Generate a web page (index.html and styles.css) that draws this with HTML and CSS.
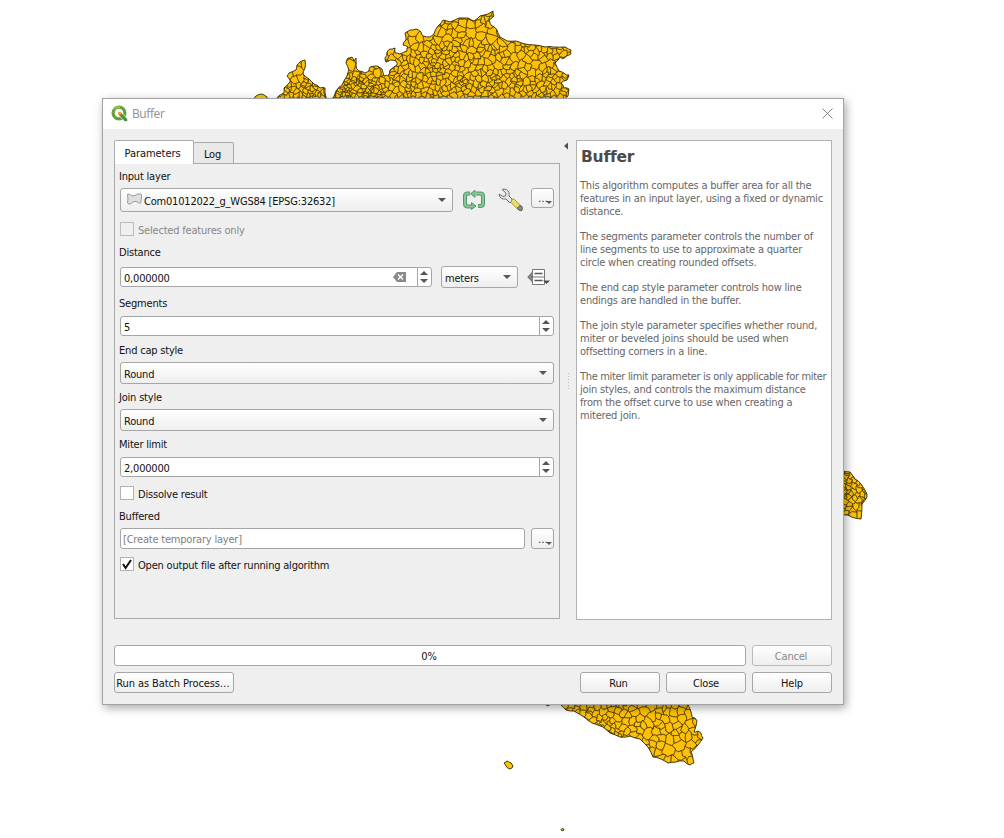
FILE: index.html
```
<!DOCTYPE html>
<html lang="en">
<head>
<meta charset="utf-8">
<title>Buffer</title>
<link rel="stylesheet" href="styles.css">
</head>
<body>
<svg class="map" id="map" width="1004" height="838" viewBox="0 0 1004 838"></svg>
<main class="dialog">
  <header class="titlebar">
    <svg class="logo" width="17" height="17" viewBox="0 0 17 17"><circle cx="8" cy="8" r="5.9" fill="none" stroke="#62a33c" stroke-width="3.2"/><path d="M3 4.500A6 6 0 0 1 9 2" fill="none" stroke="#8cc04b" stroke-width="2"/><path d="M8 7.500l2.600.3 6 6.200v2.500h-3L8 10.500z" fill="#509039" stroke="#fff" stroke-width=".7"/><path d="M7 6.800h3v3H7z" fill="#ee9b3c"/></svg>
    <span class="title">Buffer</span>
    <svg class="close" width="11" height="11" viewBox="0 0 11 11"><path d="M.5.5l10 10M10.500.5l-10 10" stroke="#858585" fill="none"/></svg>
  </header>
  <div class="body">
    <div class="panels">
      <section class="left">
        <nav class="tabs"><span class="tab active">Parameters</span><span class="tab log">Log</span></nav>
        <div class="pane">
          <label class="lbl first">Input layer</label>
          <div class="row input-row">
            <div class="combo layer"><svg width="17" height="13" viewBox="0 0 17 13"><path d="M1.500 2Q1 .8 3 1q2.500 3 6 1.500Q11 .3 14.500 1q1.500.2 1 2l-.6 6.500q-.5 1.500-2 .5Q9 6.500 5 10.500q-2.500 1.500-3.500-.5Q2.500 6 1.500 2z" fill="#dedfdf" stroke="#989a9a"/></svg><span>Com01012022_g_WGS84 [EPSG:32632]</span><i class="arrow"></i></div>
            <svg class="cycle" width="24" height="20" viewBox="0 0 24 20"><g fill="none" stroke="#4f9a68" stroke-width="4"><path d="M8 3.500H6Q3 3.500 3 6v7.500q0 3 3 3h3"/><path d="M14 3.500h4q3 0 3 3v7q0 2.500-3 2.500h-2"/></g><path d="M13 .3v7L8.500 3.700zM9.500 12.500v7l4.500-3.500z" fill="#80bd8b" stroke="#4f9a68"/><g fill="none" stroke="#8cc598" stroke-width="2"><path d="M7.500 3.500H6Q3 3.500 3 6v7.500q0 3 3 3h4"/><path d="M12 3.500h6q3 0 3 3v7q0 2.500-3 2.500h-1.500"/></g></svg>
            <svg class="wrench" width="26" height="24" viewBox="0 0 26 24"><path d="M4 1.500Q9 0 11 4.500v3.500l4 4-3 3-4-4Q2 12 1 6l4 2.500 2.500-.5.5-3z" fill="#e7e9e6" stroke="#6c706c"/><path d="M13.800 11l2.500.3 6.500 6.300-3.300 3.500-6.500-6.500z" fill="#eddb62" stroke="#a69842"/><path d="M22 17.500q2.500.5 2.500 3t-2.500 2.300l-3-2.500z" fill="#8d8d82" stroke="#55564f"/></svg>
            <div class="more">…<i></i></div>
          </div>
          <div class="check disabled c1"><b></b><span>Selected features only</span></div>
          <label class="lbl l2">Distance</label>
          <div class="row dist-row">
            <div class="field dist"><span>0,000000</span><svg class="clear" width="13" height="10" viewBox="0 0 13 10"><path d="M4 0h9v10H4L0 5z" fill="#8a8a8a"/><path d="M5 2.500l5 5m0-5l-5 5" stroke="#fff" stroke-width="1.300"/></svg><em class="spin"></em></div>
            <div class="combo unit"><span>meters</span><i class="arrow"></i></div>
            <svg class="override" width="24" height="18" viewBox="0 0 24 18"><path d="M6 3.500v11L.8 9z" fill="#888" stroke="#666"/><path d="M5.500 1.500h12v15h-12z" fill="#fff" stroke="#777"/><path d="M7.500 5.500h8M7.500 12.500h8" stroke="#555" stroke-width="1.400"/><path d="M3.500 9h14" stroke="#777"/><path d="M16 12.500h7L19.500 16z" fill="#4d4d4d"/></svg>
          </div>
          <label class="lbl l3">Segments</label>
          <div class="field seg"><span>5</span><em class="spin"></em></div>
          <label class="lbl l4">End cap style</label>
          <div class="combo wide"><span>Round</span><i class="arrow"></i></div>
          <label class="lbl l5">Join style</label>
          <div class="combo wide"><span>Round</span><i class="arrow"></i></div>
          <label class="lbl l5">Miter limit</label>
          <div class="field seg"><span>2,000000</span><em class="spin"></em></div>
          <div class="check c2"><b></b><span>Dissolve result</span></div>
          <label class="lbl l6">Buffered</label>
          <div class="row out-row"><div class="field out"><span>[Create temporary layer]</span></div><div class="more">…<i></i></div></div>
          <div class="check c3"><b><svg width="10" height="11" viewBox="0 0 10 11"><path d="M1 5l2.600 4L9 1" fill="none" stroke="#111" stroke-width="2"/></svg></b><span>Open output file after running algorithm</span></div>
        </div>
      </section>
      <div class="splitter"><svg width="16" height="480" viewBox="0 0 16 480"><path d="M8 2.500v7L4 6z" fill="#505050"/><path d="M8.500 233v17" stroke="#bdbdbd" stroke-dasharray="1 2"/></svg></div>
      <article class="help">
        <h1>Buffer</h1>
        <p>This algorithm computes a buffer area for all the<br>features in an input layer, using a fixed or dynamic<br>distance.</p>
        <p>The segments parameter controls the number of<br>line segments to use to approximate a quarter<br>circle when creating rounded offsets.</p>
        <p>The end cap style parameter controls how line<br>endings are handled in the buffer.</p>
        <p>The join style parameter specifies whether round,<br>miter or beveled joins should be used when<br>offsetting corners in a line.</p>
        <p><span class="tight">The miter limit parameter is only applicable for miter</span><br>join styles, and controls the maximum distance<br>from the offset curve to use when creating a<br>mitered join.</p>
      </article>
    </div>
    <div class="progress-row"><div class="progress">0%</div><div class="btn off">Cancel</div></div>
    <footer class="buttons"><div class="btn batch">Run as Batch Process…</div><div class="btn run">Run</div><div class="btn">Close</div><div class="btn">Help</div></footer>
  </div>
</main>
<script src="map.js"></script>
</body>
</html>
```

FILE: styles.css
```
* { box-sizing: border-box; }
body { margin: 0; width: 1004px; height: 838px; overflow: hidden; background: #fff; color: #111; font: 11px/16px "DejaVu Sans Condensed", "DejaVu Sans", sans-serif; font-stretch: condensed; letter-spacing: -0.2px; white-space: nowrap; }
svg { display: block; flex: none; }
.map { position: absolute; left: 0; top: 0; }
.map path { stroke: #40380f; stroke-linejoin: round; }
.dialog { position: absolute; left: 102px; top: 98px; width: 742px; height: 607px; border: 1px solid #a2a2a2; background: #efefef; box-shadow: 2px 3px 9px rgba(0,0,0,.35); }
.titlebar { height: 30px; background: #fff; display: flex; align-items: center; padding: 0 10px 1px 8px; }
.title { margin-left: 4px; flex: 1; font-family: "Open Sans", sans-serif; font-stretch: normal; font-size: 12px; color: #909090; letter-spacing: -0.4px; padding-top: 1px; }
.body { padding: 11px 11px 0; }
.panels { display: flex; height: 480px; }
.left { width: 446px; display: flex; flex-direction: column; }
.tabs { display: flex; align-items: flex-end; height: 23px; }
.tab { border: 1px solid #ababab; border-bottom: 0; border-radius: 2px 2px 0 0; text-align: center; }
.tab.active { width: 80px; height: 24px; background: #fff; line-height: 25px; align-self: flex-start; letter-spacing: -0.05px; padding-right: 3px; z-index: 1; }
.tab.log { width: 40px; height: 21px; background: #e9e9e9; border-left: 0; line-height: 24px; padding-right: 2px; }
.pane { height: 456px; border: 1px solid #a9a9a9; padding: 4px 5px; display: flex; flex-direction: column; }
.lbl { height: 16px; margin-left: -1px; flex: none; padding-top: 1px; }
.lbl.l2 { padding-top: 0; }
.l2 { margin-top: 7px; }
.l3 { margin-top: 7px; }
.l4, .l6 { margin-top: 6px; }
.l5 { margin-top: 5px; }
.row { display: flex; align-items: center; flex: none; }
.combo, .field, .btn, .more, .progress { border: 1px solid #a6a6a6; border-radius: 3px; display: flex; align-items: center; flex: none; }
.combo, .btn, .more { background: linear-gradient(#fff, #eee); }
.field, .progress { background: #fff; }
.combo { height: 22px; padding: 3px 6px 0 3px; justify-content: space-between; }
.arrow { width: 0; height: 0; border: 4px solid transparent; border-top: 4px solid #555; border-bottom: 0; margin-top: -3px; }
.input-row { margin-top: 4px; height: 24px; }
.layer { width: 333px; height: 24px; }
.layer span { flex: 1; margin-left: 1px; }
.layer > svg { margin: -4px 0 0 2px; }
.cycle { margin-left: 9px; }
.wrench { margin-left: 12px; }
.more { width: 23px; height: 20px; margin-left: auto; padding: 2px 2px 0 6px; position: relative; color: #222; line-height: 18px; align-self: flex-start; }
.more i { position: absolute; right: 1px; bottom: 3px; border: 3px solid transparent; border-top-color: #555; border-bottom: 0; }
.out-row .more { height: 21px; }
.check { display: flex; flex: none; height: 16px; }
.check span { padding-top: 1px; }
.check b { width: 14px; height: 14px; border: 1px solid #b2b2b2; background: #fff; padding: 1px; margin-right: 4px; }
.disabled { color: #888; }
.disabled b { background: #f0f0f0; border-color: #bcbcbc; }
.c1 { margin-top: 10px; }
.dist-row { margin-top: 5px; height: 22px; }
.field { height: 20px; padding: 3px 0 0 3px; position: relative; }
.dist { width: 312px; justify-content: space-between; }
.clear { margin: -4px 25px 0 0; }
.spin { position: absolute; right: 0; top: 0; bottom: 0; width: 14px; border-left: 1px solid #a6a6a6; }
.spin::before, .spin::after { content: ""; position: absolute; left: 2px; border: 4px solid transparent; }
.spin::before { top: 3px; border-top: 0; border-bottom-color: #555; }
.spin::after { bottom: 3px; border-bottom: 0; border-top-color: #555; }
.unit { width: 77px; margin-left: 9px; }
.override { margin-left: 9px; }
.seg { width: 434px; margin-top: 5px; }
.wide { width: 434px; margin-top: 4px; }
.c2 { margin-top: 9px; }
.out-row { margin-top: 4px; height: 21px; }
.out { width: 405px; height: 21px; color: #808080; padding: 2px 0 0 2px; }
.c3 { margin-top: 8px; }
.splitter { width: 16px; }
.help { width: 256px; border: 1px solid #b1b1b1; background: #fff; padding: 7px 3px; color: #666; }
.help h1 { font: bold 15.500px/19px "DejaVu Sans", sans-serif; color: #4b4b4b; margin: 0 0 12px 1px; letter-spacing: -0.2px; }
.help p { margin: 0 0 12px; line-height: 13px; }
.tight { letter-spacing: -0.32px; }
.progress-row { display: flex; gap: 6px; margin-top: 25px; }
.progress { width: 632px; height: 21px; justify-content: center; padding: 2px 2px 0 0; }
.btn { width: 80px; height: 21px; justify-content: center; padding-top: 2px; }
.btn.off { color: #888; border-color: #bbb; padding-right: 2px; }
.buttons { display: flex; gap: 6px; margin-top: 6px; }
.buttons .run { padding-right: 3px; }
.buttons .batch { width: 120px; margin-right: auto; letter-spacing: -0.1px; padding-right: 2px; }
```

FILE: map.js
```
// Fills each land outline with an irregular mosaic of municipality cells.
let seed = 7;
const rnd = () => (seed = (seed * 16807) % 2147483647) / 2147483647;
const NS = 'http://www.w3.org/2000/svg';
const map = document.getElementById('map');
const areas = [
  { s: y => 4, p: '254,99 256,96 262,94 267,97 268,99' },
  { s: y => y > 80 ? 3.2 : 7, p: '275,100 280,95 284,93 284,88 289,83 290,80 287,76 289,73 296,70 297,65 300,62 305,60 305,68 303,74 309,79 314,84 320,88 325,88 325,93 328,100' },
  { s: (y, x) => x < 385 ? (y > 76 ? 3 : 6) : y < 45 ? 7.5 : y < 68 ? (x > 430 && x < 450 ? 4 : 6.5) : 4.6, p: '331,100 336,91 342,85 347,76 349,70 346,63 348,58 352,57 354,61 356,58 356,66 359,71 365,73 369,71 370,67 377,66 382,69 384,76 388,76 390,70 397,65 396,61 390,60 386,62 385,58 387,52 390,49 395,48 395,53 400,54 407,51 408,47 403,45 406,40 405,33 410,30 416,29 421,32 423,36 430,37 434,34 438,26 443,20 450,22 459,18 468,18 474,21 480,16 488,14 493,11 494,16 489,20 492,26 497,30 500,37 507,41 516,41 525,44 535,45 545,47 553,47 565,47 571,50 571,54 563,59 560,57 555,63 559,71 565,74 569,75 567,80 561,83 564,88 569,89 568,96 564,100' },
  { s: (y, x) => x < 627 ? 5.5 : 9, p: '544,702 547,706 552,704 560,704 566,710 574,711 584,717 592,723 603,727 610,733 620,737 630,736 640,739 648,747 653,757 661,759 668,763 676,762 684,761 690,765 694,763 693,759 691,752 697,746 703,738 701,733 698,731 694,732 697,721 692,717 690,709 687,702' },
  { s: y => 4.1, p: '840,470 850,472 855,479 861,484 866,492 867,497 862,504 861,519 855,518 848,515 840,515' },
  { s: y => 20, p: '504,763 507,761 511,763 513,766 510,769 506,766' },
  { s: y => 20, p: '561.500,829 563,828 564,830 562,831' }
];
function cell(a, near) {
  let poly = [[-15, -15], [15, -15], [15, 15], [-15, 15]].map(q => [a[0] + q[0], a[1] + q[1]]);
  for (const b of near) {
    const nx = b[0] - a[0], ny = b[1] - a[1];
    const c = (nx * (a[0] + b[0]) + ny * (a[1] + b[1])) / 2;
    const out = [];
    poly.forEach((p, i) => {
      const q = poly[(i + 1) % poly.length];
      const dp = p[0] * nx + p[1] * ny - c, dq = q[0] * nx + q[1] * ny - c;
      if (dp <= 0) out.push(p);
      if (dp * dq < 0) { const t = dp / (dp - dq); out.push([p[0] + (q[0] - p[0]) * t, p[1] + (q[1] - p[1]) * t]); }
    });
    poly = out;
  }
  return poly;
}
// Bends a boundary point so that shared edges stay shared.
function bend([x, y]) {
  const dx = Math.sin(x * 0.9 + y * 0.5) + Math.sin(y * 1.4 - x * 0.3) * 0.8;
  const dy = Math.sin(y * 0.8 - x * 0.7 + 2) + Math.sin(x * 1.3 + y * 0.2) * 0.8;
  return (x + dx * 0.75).toFixed(1) + ',' + (y + dy * 0.75).toFixed(1);
}
function add(parent, tag, attrs) {
  const e = document.createElementNS(NS, tag);
  for (const k in attrs) e.setAttribute(k, attrs[k]);
  parent.appendChild(e);
  return e;
}
areas.forEach((area, n) => {
  const pts = area.p.split(' ').map(t => t.split(',').map(Number));
  const xs = pts.map(p => p[0]), ys = pts.map(p => p[1]);
  const x0 = Math.min(...xs), x1 = Math.max(...xs), y0 = Math.min(...ys), y1 = Math.max(...ys);
  let d = 'M' + pts[0];
  pts.forEach((p, i) => {
    const q = pts[(i + 1) % pts.length];
    d += `Q${(p[0] + q[0]) / 2 + rnd() * 3 - 1.5},${(p[1] + q[1]) / 2 + rnd() * 3 - 1.5} ${q}`;
  });
  const clip = add(map, 'clipPath', { id: 'land' + n });
  add(clip, 'path', { d });
  add(map, 'path', { d, fill: '#ffc107', 'stroke-width': 1 });
  const seeds = [];
  const tries = (x1 - x0) * (y1 - y0) * 0.22;
  for (let k = 0; k < tries; k++) {
    const x = x0 + rnd() * (x1 - x0), y = y0 + rnd() * (y1 - y0);
    const v = rnd();
    const r = area.s(y, x) * (0.4 + v * v * 0.9);
    if (!seeds.some(s => Math.hypot(s[0] - x, s[1] - y) < Math.max(r, s[2]))) seeds.push([x, y, r]);
  }
  if (seeds.length < 3) return;
  let lines = '';
  for (const a of seeds) {
    const near = seeds.filter(b => b !== a && Math.abs(b[0] - a[0]) < 30 && Math.abs(b[1] - a[1]) < 30);
    const poly = cell(a, near);
    if (poly.length < 3) continue;
    const path = [];
    poly.forEach((p, i) => {
      const q = poly[(i + 1) % poly.length];
      path.push(bend(p), bend([(p[0] + q[0]) / 2, (p[1] + q[1]) / 2]));
    });
    lines += 'M' + path.join('L') + 'Z';
  }
  add(map, 'path', { d: lines, fill: 'none', 'stroke-width': 0.55, 'clip-path': `url(#land${n})` });
});
```
